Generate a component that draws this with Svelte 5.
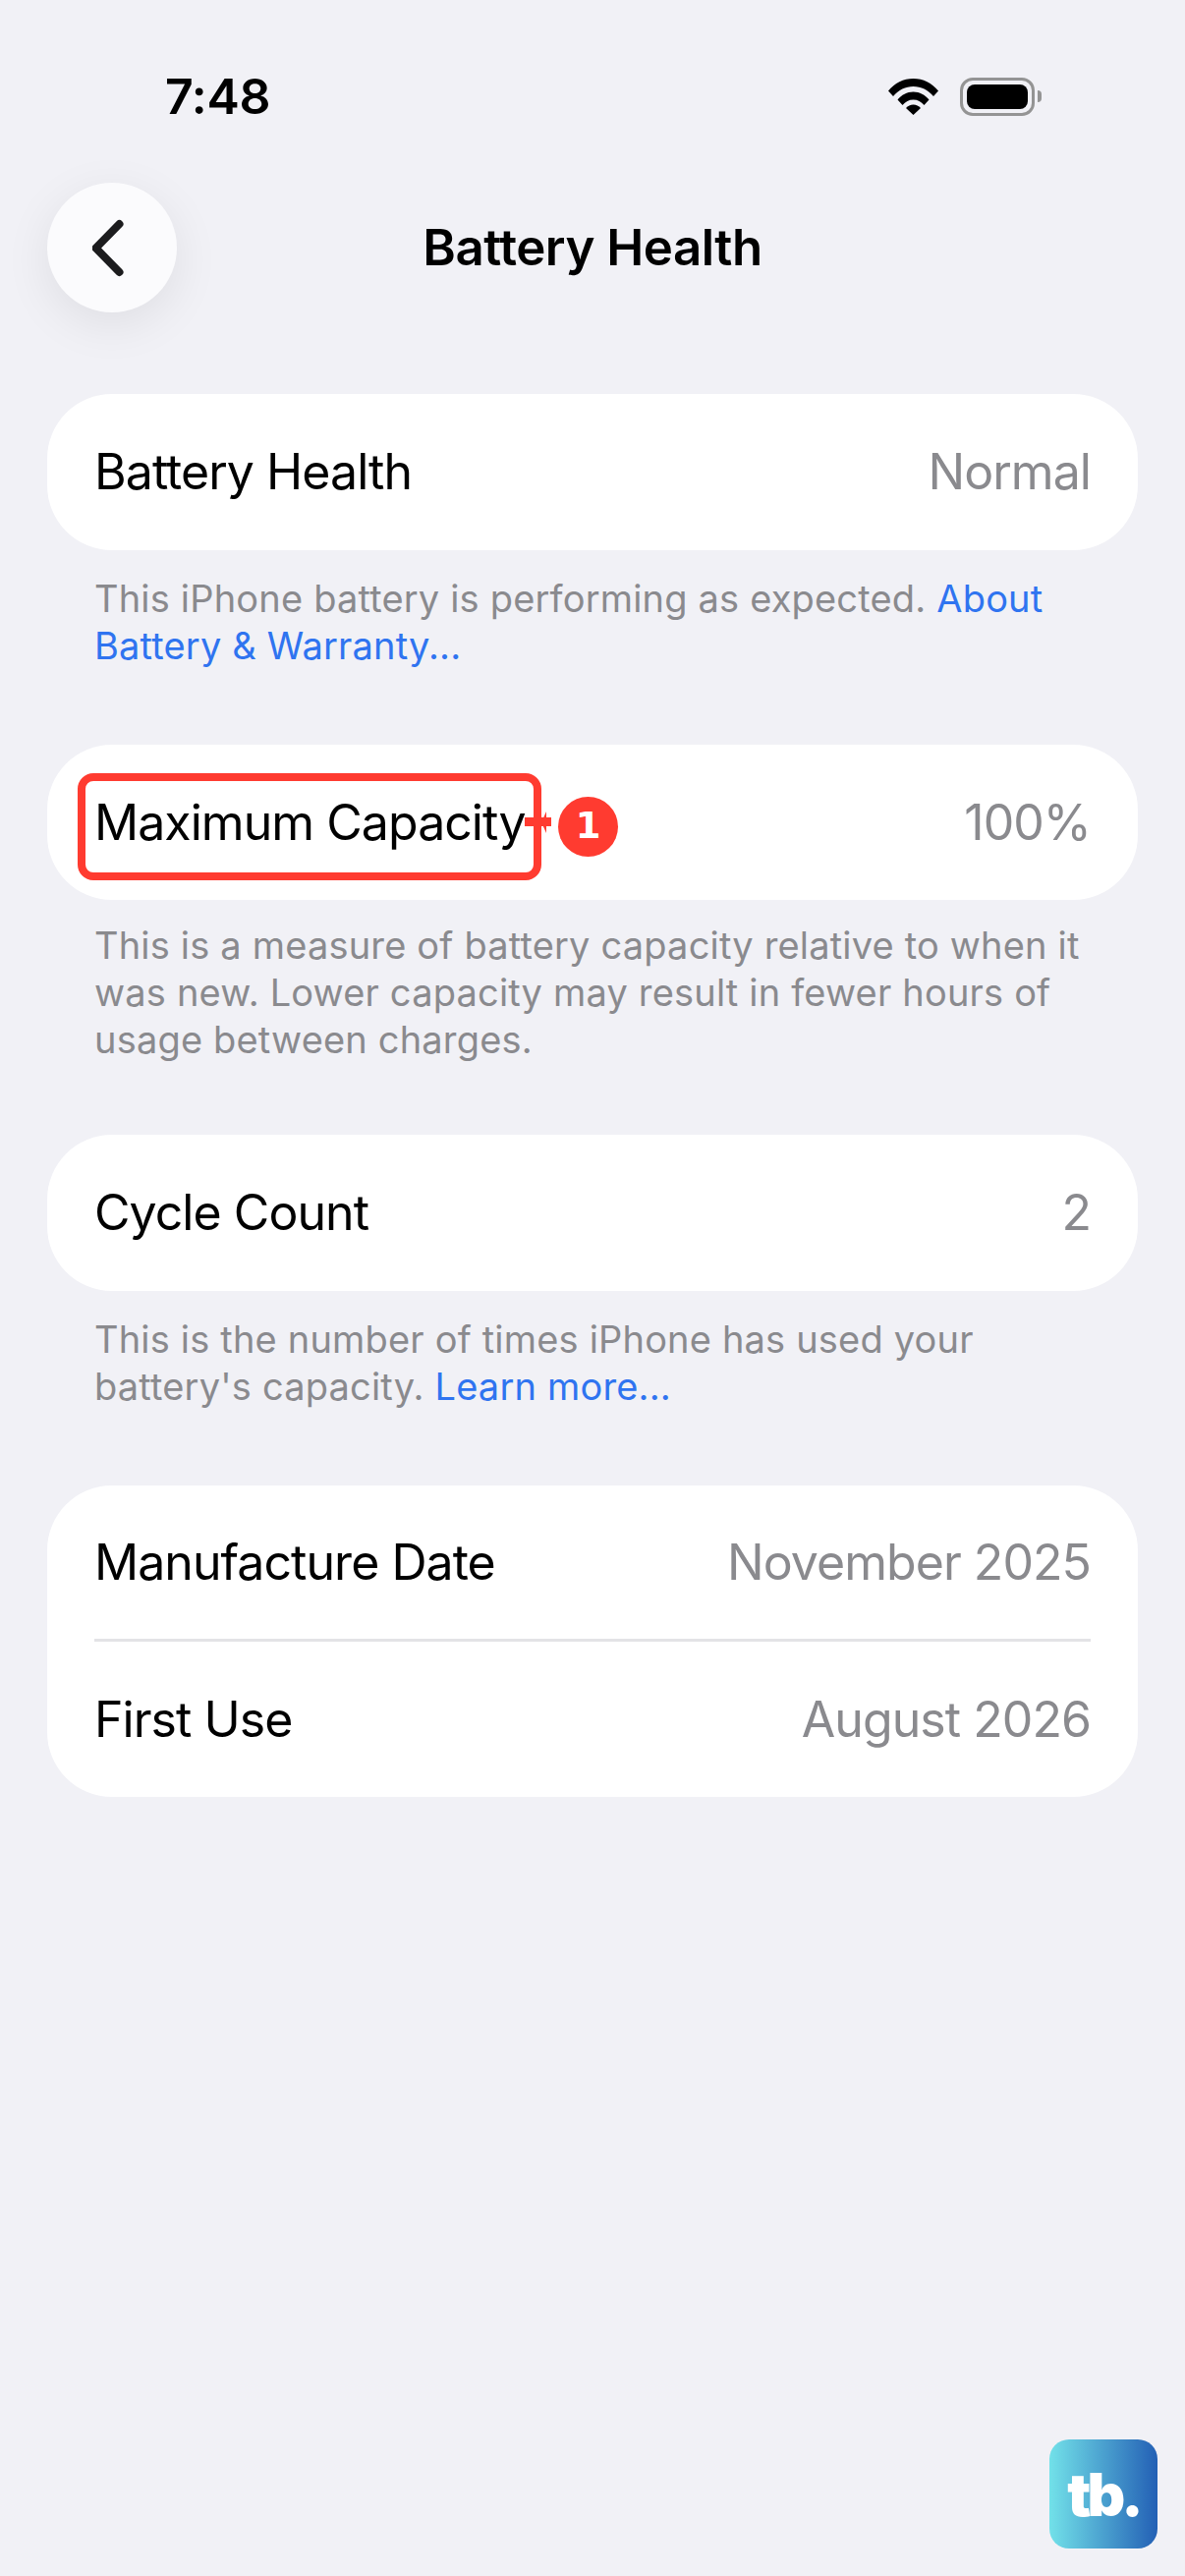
<script lang="ts">
  const sections = [
    {
      rows: [{ label: 'Battery Health', value: 'Normal' }],
      note: 'This iPhone battery is performing as expected. ',
      link: 'About Battery & Warranty...'
    },
    {
      rows: [{ label: 'Maximum Capacity', value: '100%' }],
      note: 'This is a measure of battery capacity relative to when it was new. Lower capacity may result in fewer hours of usage between charges.',
      link: '',
      marked: true
    },
    {
      rows: [{ label: 'Cycle Count', value: '2' }],
      note: "This is the number of times iPhone has used your battery's capacity. ",
      link: 'Learn more...'
    },
    {
      rows: [
        { label: 'Manufacture Date', value: 'November 2025' },
        { label: 'First Use', value: 'August 2026' }
      ],
      note: '',
      link: ''
    }
  ];
</script>

<div class="screen">
  <div class="status">
    <span class="time">7:48</span>
    <div class="status-icons">
      <svg class="wifi" width="51" height="37" viewBox="0 0 51 37">
        <path d="M0 12.500C6.500 4.500 15.500 0 25.500 0S44.500 4.500 51 12.500L46 18C40.500 11.500 33.500 8 25.500 8S10.500 11.500 5 18Z" fill="#000" />
        <path d="M9.500 21.500C13.500 16.500 19 13.500 25.500 13.500S37.500 16.500 41.500 21.500L36.500 27C33.500 23.500 30 21.500 25.500 21.500S17.500 23.500 14.500 27Z" fill="#000" />
        <path d="M18 30C20 28 22.500 26.500 25.500 26.500S31 28 33 30L25.500 37Z" fill="#000" />
      </svg>
      <div class="battery"><div class="battery-fill"></div></div>
      <div class="battery-nub"></div>
    </div>
  </div>

  <header class="nav">
    <button class="back" aria-label="Back">
      <svg width="40" height="60" viewBox="0 0 40 60">
        <path d="M27.500 6 L3.500 30.500 L27.500 55" fill="none" stroke="#1c1c1e" stroke-width="8" stroke-linecap="round" stroke-linejoin="round" />
      </svg>
    </button>
    <h1>Battery Health</h1>
  </header>

  {#each sections as section}
    <section class="section" class:tight={section.marked}>
      <div class="card">
        {#each section.rows as row}
          <div class="row">
            <span class="label">
              {row.label}
              {#if section.marked}
                <span class="highlight"></span>
                <svg class="connector" width="27" height="22" viewBox="0 0 27 22">
                  <rect x="0" y="6" width="27" height="9" fill="#ff3b30" />
                  <polygon points="17,11 22,0 22,22" fill="#ff3b30" />
                </svg>
                <span class="badge">1</span>
              {/if}
            </span>
            <span class="value">{row.value}</span>
          </div>
        {/each}
      </div>
      {#if section.note}
        <p class="note">{section.note}{#if section.link}<span class="link">{section.link}</span>{/if}</p>
      {/if}
    </section>
  {/each}

  <div class="logo">tb.</div>
</div>

<style>
  :global(body) {
    margin: 0;
    background: #f2f2f7;
  }

  .screen {
    position: relative;
    height: 2622px;
    background: #f1f1f6;
    font-family: Inter, "Liberation Sans", sans-serif;
    color: #000;
    overflow: hidden;
  }

  .status {
    display: flex;
    justify-content: space-between;
    align-items: center;
    height: 36px;
    padding: 80px 146px 0 168px;
  }

  .time {
    font-size: 50px;
    font-weight: 600;
    line-height: 36px;
    letter-spacing: -0.3px;
  }

  .status-icons {
    display: flex;
    align-items: center;
  }

  .wifi {
    margin-right: 22px;
  }

  .battery {
    box-sizing: border-box;
    width: 76px;
    height: 39px;
    padding: 4px;
    border: 3px solid #949494;
    border-radius: 13px;
  }

  .battery-fill {
    height: 100%;
    background: #000;
    border-radius: 8px;
  }

  .battery-nub {
    width: 4px;
    height: 12px;
    margin-left: 3px;
    background: #949494;
    border-radius: 0 4px 4px 0;
  }

  .nav {
    position: relative;
    display: flex;
    justify-content: center;
    align-items: center;
    height: 132px;
    margin: 70px 48px 83px;
  }

  .back {
    position: absolute;
    left: 0;
    top: 0;
    display: flex;
    align-items: center;
    justify-content: center;
    width: 132px;
    height: 132px;
    padding: 0;
    border: none;
    border-radius: 50%;
    background: #fbfbfd;
    box-shadow: 0 12px 48px rgba(0, 0, 0, 0.08);
  }

  h1 {
    margin: 0;
    font-size: 51px;
    font-weight: 600;
    line-height: 62px;
    letter-spacing: -0.5px;
  }

  .section {
    margin: 0 48px 77px;
  }

  .section.tight {
    margin-bottom: 73px;
  }

  .card {
    background: #fff;
    border-radius: 66px;
    padding: 0 48px;
  }

  .row {
    box-sizing: border-box;
    display: flex;
    justify-content: space-between;
    align-items: center;
    height: 158.5px;
    font-size: 50px;
    line-height: 60px;
    letter-spacing: -0.95px;
  }

  .row:first-child:not(:last-child) {
    height: 156px;
  }

  .row + .row {
    height: 161px;
    border-top: 3px solid #e3e3e6;
  }

  .label {
    position: relative;
  }

  .value {
    color: #8a8a8e;
  }

  .highlight {
    position: absolute;
    left: -17px;
    top: -20px;
    width: 472px;
    height: 109px;
    box-sizing: border-box;
    border: 8px solid #ff3b30;
    border-radius: 16px;
  }

  .connector {
    position: absolute;
    left: 438px;
    top: 19px;
  }

  .badge {
    position: absolute;
    left: 472px;
    top: 4px;
    display: flex;
    align-items: center;
    justify-content: center;
    width: 61px;
    height: 61px;
    border-radius: 50%;
    background: #ff3b30;
    color: #fff;
    font-family: "DejaVu Sans", sans-serif;
    font-size: 37px;
    font-weight: 700;
    letter-spacing: 0;
  }

  .note {
    margin: 25px 48px 0;
    font-size: 38px;
    line-height: 48px;
    letter-spacing: 0.18px;
    color: #8a8a8e;
  }

  .tight .note {
    margin-top: 22px;
  }

  .link {
    color: #2f74f0;
  }

  .logo {
    position: absolute;
    left: 1068px;
    top: 2483px;
    display: flex;
    align-items: center;
    justify-content: center;
    width: 110px;
    height: 111px;
    border-radius: 20px;
    background: linear-gradient(90deg, #72e1e9, #2360b5);
    color: #fff;
    font-size: 60px;
    font-weight: 900;
    letter-spacing: -4px;
  }
</style>
